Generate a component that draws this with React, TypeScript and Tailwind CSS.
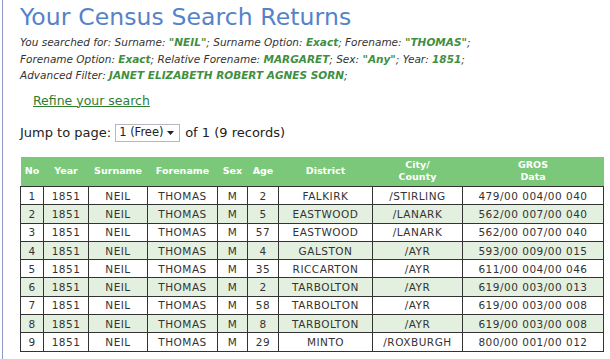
import React from "react";

const rows = [
  ["1", "1851", "NEIL", "THOMAS", "M", "2", "FALKIRK", "/STIRLING", "479/00 004/00 040"],
  ["2", "1851", "NEIL", "THOMAS", "M", "5", "EASTWOOD", "/LANARK", "562/00 007/00 040"],
  ["3", "1851", "NEIL", "THOMAS", "M", "57", "EASTWOOD", "/LANARK", "562/00 007/00 040"],
  ["4", "1851", "NEIL", "THOMAS", "M", "4", "GALSTON", "/AYR", "593/00 009/00 015"],
  ["5", "1851", "NEIL", "THOMAS", "M", "35", "RICCARTON", "/AYR", "611/00 004/00 046"],
  ["6", "1851", "NEIL", "THOMAS", "M", "2", "TARBOLTON", "/AYR", "619/00 003/00 013"],
  ["7", "1851", "NEIL", "THOMAS", "M", "58", "TARBOLTON", "/AYR", "619/00 003/00 008"],
  ["8", "1851", "NEIL", "THOMAS", "M", "8", "TARBOLTON", "/AYR", "619/00 003/00 008"],
  ["9", "1851", "NEIL", "THOMAS", "M", "29", "MINTO", "/ROXBURGH", "800/00 001/00 012"],
];

const widths = ["w-[23px]", "w-[45px]", "w-[59px]", "w-[70px]", "w-[30px]", "w-[31px]", "w-[94px]", "w-[90px]", "w-[141px]"];

function V({ children }: { children: React.ReactNode }) {
  return <span className="font-bold text-[#3f8f3f]">{children}</span>;
}

export default function App() {
  return (
    <div className="w-[610px] h-[359px] bg-white overflow-hidden pl-[2px] font-['DejaVu_Sans',Verdana,sans-serif]">
      <div className="h-full border-l border-[#8d9bc6] pl-[17px] pt-[3px]">
        <h1 className="text-[23.5px] leading-[28px] text-[#5582c8] tracking-[0.1px]">Your Census Search Returns</h1>
        <div className="mt-[3px] italic text-[10.5px] leading-[16.5px] text-[#333]">
          <div>
            You searched for: Surname: <V>"NEIL"</V>; Surname Option: <V>Exact</V>; Forename: <V>"THOMAS"</V>;
          </div>
          <div>
            Forename Option: <V>Exact</V>; Relative Forename: <V>MARGARET</V>; Sex: <V>"Any"</V>; Year: <V>1851</V>;
          </div>
          <div>
            Advanced Filter: <V>JANET ELIZABETH ROBERT AGNES SORN</V>;
          </div>
        </div>
        <div className="mt-[4px] pl-[13px]">
          <a className="text-[12.5px] leading-[16px] text-[#2e7d32] underline">Refine your search</a>
        </div>
        <div className="mt-[12px] flex items-center text-[13px] text-[#222] h-[18px]">
          <span>Jump to page:</span>
          <div className="ml-[4px] h-[18px] w-[65px] border border-[#b5b8c0] flex items-center pl-[3px] text-[11.5px]">
            <span>1 (Free)</span>
            <svg className="ml-auto mr-[5px]" width="7" height="4" viewBox="0 0 7 4">
              <path d="M0 0h7L3.5 4z" fill="#222" />
            </svg>
          </div>
          <span className="ml-[5px]">of 1 (9 records)</span>
        </div>
        <table className="mt-[15px] border-collapse text-[10.5px] text-[#333] table-fixed w-[583px]">
          <thead>
            <tr className="bg-[#7bc87a] text-white font-bold text-[9.5px] leading-[12px]">
              {["No", "Year", "Surname", "Forename", "Sex", "Age", "District", "City/\nCounty", "GROS\nData"].map((h, i) => (
                <th key={i} className={`${widths[i]} h-[30px] px-0 font-bold whitespace-pre-line`}>{h}</th>
              ))}
            </tr>
          </thead>
          <tbody>
            {rows.map((r, ri) => (
              <tr key={ri} className={ri % 2 === 1 ? "bg-[#e3f0df]" : "bg-white"}>
                {r.map((c, ci) => (
                  <td key={ci} className="h-[18.3px] border border-[#333] text-center p-0 leading-[16px] tracking-[0.5px]">{c}</td>
                ))}
              </tr>
            ))}
          </tbody>
        </table>
      </div>
    </div>
  );
}
